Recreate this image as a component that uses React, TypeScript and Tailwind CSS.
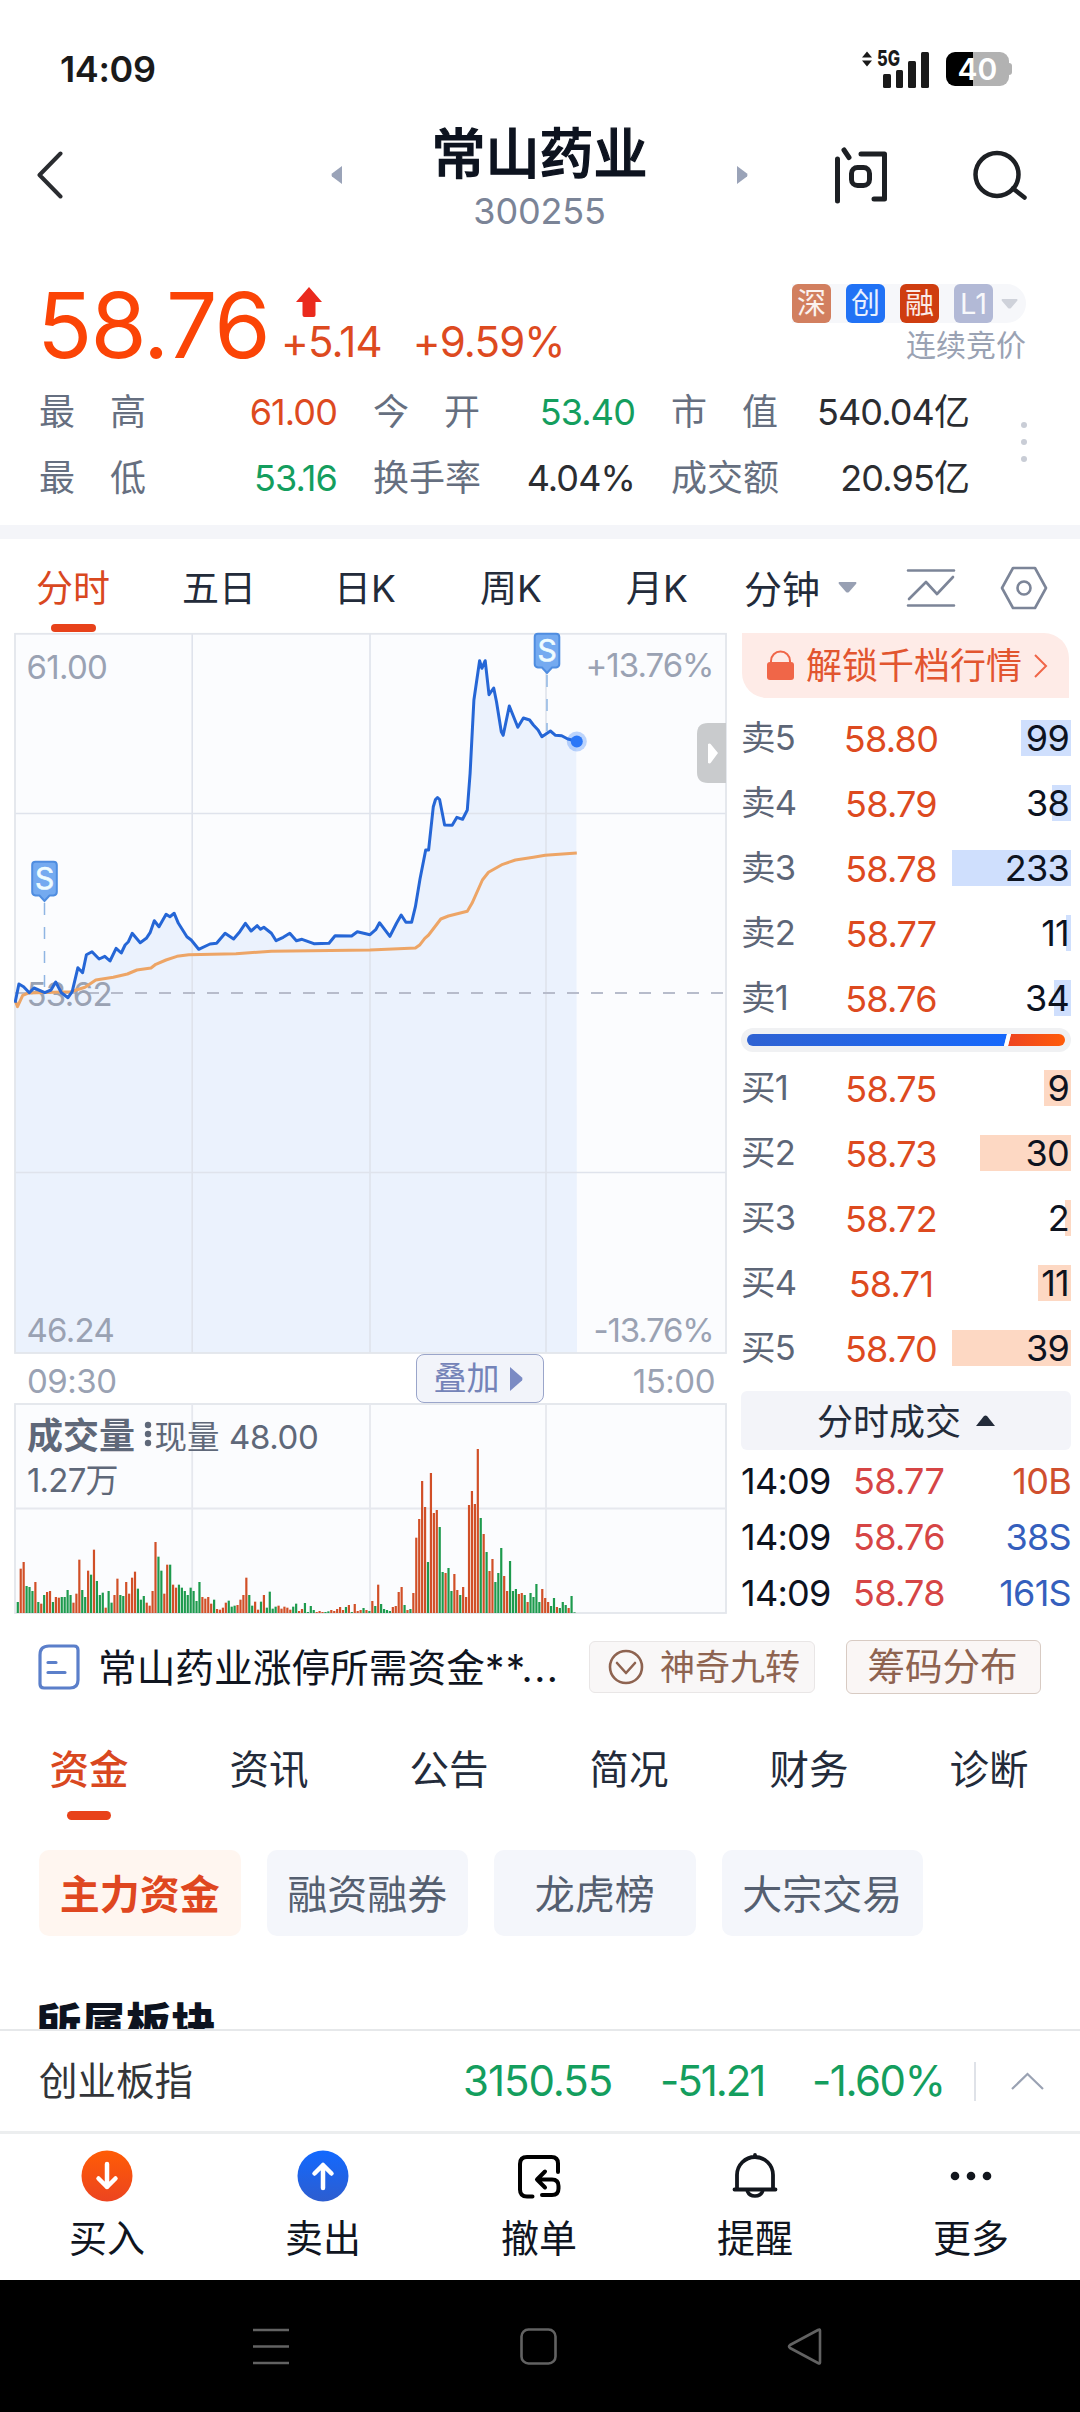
import type { ReactNode } from "react";
import clsx from "clsx";

const stats = [
  [
    { label: ["最", "高"], value: "61.00", tone: "text-[#dd4a1f]" },
    { label: ["今", "开"], value: "53.40", tone: "text-[#149e5e]" },
    { label: ["市", "值"], value: "540.04亿", tone: "text-[#2b2d31]" },
  ],
  [
    { label: ["最", "低"], value: "53.16", tone: "text-[#149e5e]" },
    { label: ["换", "手", "率"], value: "4.04%", tone: "text-[#2b2d31]" },
    { label: ["成", "交", "额"], value: "20.95亿", tone: "text-[#2b2d31]" },
  ],
];

const badges = [
  { text: "深", bg: "bg-[#d27f5f]" },
  { text: "创", bg: "bg-[#2172f5]" },
  { text: "融", bg: "bg-[#cf3d10]" },
  { text: "L1", bg: "bg-[#b2b9d6]" },
];

const periods = ["分时", "五日", "日K", "周K", "月K"];

const sells = [
  { label: "卖5", price: "58.80", qty: 99, width: 50 },
  { label: "卖4", price: "58.79", qty: 38, width: 19 },
  { label: "卖3", price: "58.78", qty: 233, width: 119 },
  { label: "卖2", price: "58.77", qty: 11, width: 5 },
  { label: "卖1", price: "58.76", qty: 34, width: 17 },
];

const buys = [
  { label: "买1", price: "58.75", qty: 9, width: 27 },
  { label: "买2", price: "58.73", qty: 30, width: 91 },
  { label: "买3", price: "58.72", qty: 2, width: 6 },
  { label: "买4", price: "58.71", qty: 11, width: 33 },
  { label: "买5", price: "58.70", qty: 39, width: 119 },
];

const ticks = [
  { time: "14:09", price: "58.77", qty: "10B", tone: "text-[#cf4f2e]" },
  { time: "14:09", price: "58.76", qty: "38S", tone: "text-[#355fbd]" },
  { time: "14:09", price: "58.78", qty: "161S", tone: "text-[#355fbd]" },
];

const tabs = ["资金", "资讯", "公告", "简况", "财务", "诊断"];
const chips = ["主力资金", "融资融券", "龙虎榜", "大宗交易"];

const priceLine =
  "0.1,369.7 3.9,351 8.6,353.7 14.3,359.7 19,355 29.8,359.7 36,357 40.7,349 46.4,359.7 53,364.7 57.2,358.7 62.9,334.7 67.6,339.7 71.4,321.7 77,318.7 84.1,326 89.8,323.3 95,328 101.1,315.3 106.3,320 110.1,312 113.4,308.7 117.2,300.3 125.2,309.7 131.3,305.3 135.1,299.7 139.3,287.7 144,293.7 151.1,281.3 154.9,283.7 159.2,280.3 163.4,290.3 171.9,303.7 176.2,307 183.7,316.3 195,311 201.6,310.3 210.1,300.3 218.6,306 224.8,298.7 230.4,290.3 236.1,298 242.2,292.7 245.5,296.3 248.8,294.3 256.4,300.3 261.1,307.7 268.2,304.3 274.8,300.3 281.4,307.7 287,306.3 298.9,310.7 314,310.3 320.1,302.7 336.6,303 342.3,298.7 355,301.7 360.7,296.7 364.5,289.7 374.9,303.3 381.5,290.3 386.2,282 390.9,289.3 396.6,289.3 400.4,273.7 405,246 410.7,217 413.6,217 418.3,173.7 420.5,166.5 422.5,164.5 424.6,166.5 429.6,192 437.2,192.3 441.9,184.3 447.6,186.3 452.3,177 455.1,140.3 458.9,67 464.6,27.7 466.9,35.3 470.2,27.7 474,61.7 478.7,55 481.5,68.7 486.3,98.7 488.2,102.3 494.3,73 502.8,94.3 508.4,85 514.6,87 518.4,92 523.1,97 526.9,103.7 535.4,98 540.5,102.3 546.7,102.7 552.8,106 561.3,108";

const averageLine =
  "0,367 2.5,373.7 7.7,362.3 13.3,360 55.8,358.7 70,354.3 80.8,347 98.3,344.3 112.4,341 121.9,337 136,335 140.8,331.3 151,327 162,323.3 173.8,321.7 221,320.7 256.4,318.3 355,317 400.4,315 405,311.7 409.8,305.3 413.6,302 425.8,286 433.4,283 452.3,278.3 457,270.3 467.4,247 473.5,239.3 487.7,231.3 500.4,227 518.4,224.3 530.2,222.3 561.8,220";

// one bar per minute, negative when the price fell; unit is a third of a pixel
const volumes = [
  -33, 133, 153, -81, -78, -66, 93, -33, 28, -54, 63, 66, -33, 48, 46, -48, -48, -69, -54, 31, 58, 160, -69, -48,
  127, -115, 190, -96, -54, -61, 16, -66, -31, 54, 103, -54, -51, 93, 58, 106, 124, -73, -40, -51, 31, 22, 66, 213,
  -169, -127, 58, 145, -145, 85, 76, -85, -76, -66, -54, -76, -66, -36, -93, 48, 43, 48, 28, -40, 12, 10, 16, 31,
  -37, -19, -22, 24, 40, 54, 106, -54, -22, 34, 10, -34, 54, -16, -64, -13, -19, 22, 13, 19, 16, 10, -19, -28,
  6, 12, -30, -3, -21, -9, 3, 6, 3, -3, -5, 9, 6, 12, 18, 9, -18, 24, -3, 27, 6, 9, -15, 9,
  -6, 36, -21, 85, -27, -12, -9, -6, 18, 21, 63, 78, -24, 9, -12, 60, 226, 282, 396, 318, -153, 420, 300, 309,
  -258, -123, 120, -135, -66, 117, 69, -54, 78, 48, 324, 366, 327, 492, -285, 237, -183, 126, 162, -93, -120, -195,
  111, 66, -156, -66, -72, 57, 60, -54, 33, -60, -48, -87, -33, 72, 45, 33, -21, -45, 18, -15, -33, -24, 15, -51, -2,
];

function StatusBar() {
  return (
    <div className="flex h-[110px] items-center justify-between pt-[28px] pr-[68px] pl-[60px]">
      <span className="text-[36px] font-semibold tracking-[-0.01em] text-[#1a1a1a]">14:09</span>
      <div className="flex items-center gap-4">
        <svg className="overflow-visible" width="68" height="38" viewBox="0 0 68 38" fill="#1a1a1a">
          <path d="M0 7.500 5 1.500l5 6zM0 10.500h10l-5 6z" />
          <text x="15" y="16" fontSize="21" fontWeight="800" textLength="23" lengthAdjust="spacingAndGlyphs">5G</text>
          <rect x="21" y="24" width="8" height="14" rx="1.500" />
          <rect x="34" y="20" width="7" height="18" rx="1.500" />
          <rect x="46" y="11" width="8" height="27" rx="1.500" />
          <rect x="59" y="2" width="8" height="36" rx="1.500" />
        </svg>
        <div className="flex items-center">
          <div className="flex h-[34px] w-[63px] items-center justify-center rounded-[9px] bg-linear-to-r from-black from-43% to-[#b2b2b2] to-43% text-[30px] leading-none font-semibold text-white">
            40
          </div>
          <div className="h-3 w-[3px] rounded-r-sm bg-[#b2b2b2]" />
        </div>
      </div>
    </div>
  );
}

function Header() {
  return (
    <header className="flex h-[130px] items-center pr-[50px] pl-[37px]">
      <svg width="26" height="48" viewBox="0 0 26 48" fill="none" stroke="#2a2c30" strokeWidth="4" strokeLinecap="round" strokeLinejoin="round">
        <path d="M23.500 2.500 2.500 24l21 21.500" />
      </svg>
      <svg className="ml-[268px]" width="11" height="20" viewBox="0 0 11 20" fill="#9aa3b8">
        <path d="M11 1v18L1 11.500q-1-1.500 0-3z" />
      </svg>
      <div className="flex w-[395px] flex-col items-center gap-[11px] pt-[6px]">
        <h1 className="text-[54px] leading-[54px] font-medium text-[#0d131f] [-webkit-text-stroke:1.2px]">常山药业</h1>
        <span className="text-[36px] leading-[36px] tracking-[-0.005em] text-[#7b8497]">300255</span>
      </div>
      <svg width="11" height="20" viewBox="0 0 11 20" fill="#9aa3b8">
        <path d="M0 1v18l10-7.500q1-1.500 0-3z" />
      </svg>
      <svg className="ml-[86px]" width="54" height="58" viewBox="0 0 54 58" fill="none" stroke="#1d2024" strokeWidth="5" strokeLinecap="round" strokeLinejoin="round">
        <path d="M3.500 13v42M10 4l5 7.500M27 8h23.500v45H40" />
        <rect x="17.500" y="21.500" width="18" height="18" rx="6" />
      </svg>
      <svg className="ml-[84px]" width="56" height="52" viewBox="0 0 56 52" fill="none" stroke="#1d2024" strokeWidth="4.500" strokeLinecap="round">
        <circle cx="25" cy="25.500" r="21.500" />
        <path d="m41 39.500 11.500 9" />
      </svg>
    </header>
  );
}

function Quote() {
  return (
    <section className="h-[285px] pt-[40px]">
      <div className="flex h-[99px] justify-between pr-[54px] pl-[37px]">
        <div className="flex">
          <span className="w-[244px] text-[91px] leading-[90px] tracking-[-0.02em] whitespace-nowrap text-[#fb4406]">58.76</span>
          <div className="flex flex-col pt-[7px]">
            <svg className="ml-[15px]" width="26" height="31" viewBox="0 0 26 31" fill="#ea2a1d">
              <path d="M13 0 26 15h-6.500v13q0 2-2 2h-9q-2 0-2-2V15H0z" />
            </svg>
            <div className="flex gap-[31px] text-[42px] leading-[47px] tracking-[-0.02em] text-[#dd4a1f]">
              <span>+5.14</span>
              <span>+9.59%</span>
            </div>
          </div>
        </div>
        <div className="flex flex-col items-end pt-1">
          <div className="flex h-[39px] items-center gap-[15px] rounded-r-full bg-[#f6f7fa] pr-2">
            {badges.map(({ text, bg }) => (
              <span key={text} className={clsx("flex h-[39px] w-[39px] items-center justify-center rounded-md text-[29px] leading-none text-white/90", bg)}>
                {text}
              </span>
            ))}
            <svg className="-ml-[7px]" width="17" height="10" viewBox="0 0 17 10" fill="#cfd2da">
              <path d="M1 0h15q1 1 0 2l-6 7q-1.500 1-3 0L1 2Q0 1 1 0z" />
            </svg>
          </div>
          <span className="mt-[5px] text-[30px] leading-[34px] text-[#9aa2b3]">连续竞价</span>
        </div>
      </div>
      <div className="flex pl-[39px]">
        <div className="flex flex-col">
          {stats.map((row, i) => (
            <div key={i} className="flex h-[66px] items-center text-[36px] leading-none">
              {row.map(({ label, value, tone }, j) => (
                <div key={value} className={clsx("flex justify-between", j === 0 && "w-[298px]", j === 1 && "ml-[36px] w-[262px]", j === 2 && "ml-[36px] w-[298px]")}>
                  <span className="flex w-[107px] justify-between text-[#666f80]">
                    {label.map((c) => <span key={c}>{c}</span>)}
                  </span>
                  <span className={clsx("tracking-[-0.025em]", tone)}>{value}</span>
                </div>
              ))}
            </div>
          ))}
        </div>
        <div className="flex flex-col gap-[11px] pt-[43px] pl-[52px]">
          <i className="size-[6px] rounded-full bg-[#c9cdd6]" />
          <i className="size-[6px] rounded-full bg-[#c9cdd6]" />
          <i className="size-[6px] rounded-full bg-[#c9cdd6]" />
        </div>
      </div>
    </section>
  );
}

function PeriodBar() {
  return (
    <nav className="flex h-[93px] text-[37px] text-[#232b3a]">
      {periods.map((p, i) => (
        <div key={p} className={clsx("flex w-[146px] flex-col items-center pt-[29px]", i === 0 && "text-[#d9481f]")}>
          <span className="leading-[42px]">{p}</span>
          {i === 0 && <div className="mt-[14px] h-[9px] w-[45px] rounded-full bg-[#e8421a]" />}
        </div>
      ))}
      <div className="flex h-[97px] flex-1 items-center pl-[14px]">
        <span className="pt-[2px] text-[38px] leading-none">分钟</span>
        <svg className="ml-[18px]" width="19" height="11" viewBox="0 0 19 11" fill="#98a0b3">
          <path d="M1 0h17q1 1 0 2l-7 8q-1.500 1-3 0L1 2Q0 1 1 0z" />
        </svg>
        <svg className="ml-[49px]" width="50" height="40" viewBox="0 0 50 40" fill="none" stroke="#7c8598" strokeWidth="2.600" strokeLinecap="round" strokeLinejoin="round">
          <path d="M2 2.500h46M2 37.500h46M3 31l17-17 11 12L47 9" />
        </svg>
        <svg className="ml-[44px]" width="48" height="44" viewBox="0 0 48 44" fill="none" stroke="#7c8598" strokeWidth="2.600" strokeLinejoin="round">
          <path d="M13 2h22l11 20-11 20H13L2 22z" />
          <circle cx="24" cy="22" r="6.500" />
        </svg>
      </div>
    </nav>
  );
}

function SellMarker({ x, y, end }: { x: number; y: number; end: number }) {
  return (
    <g transform={`translate(${x} ${y})`}>
      <path d={`M0 42V${end - y}`} stroke="#8fb5e3" strokeWidth="1.500" strokeDasharray="12 12" />
      <path d="M-9 .7H9Q12.300.7 12.300 4v27q0 3-3.300 3.500H5L0 40l-5-5.500h-4q-3.300-.5-3.300-3.500V4q0-3.300 3.300-3.300z" fill="#74aaf0" stroke="#4f8de0" strokeWidth="2" />
      <text y="28" textAnchor="middle" fontSize="30" fill="#effcff" stroke="#effcff" strokeWidth=".6">S</text>
    </g>
  );
}

function PriceChart() {
  return (
    <svg className="block" width="715" height="722" viewBox="-1 -1 715 722">
      <rect y=".5" width="711" height="719.500" fill="#fbfcfe" />
      <polygon points={`0,720 ${priceLine} 562,720`} fill="#ebf2fd" />
      <path d="M177.200 0v720M355 0v720M531 0v720M0 180.500h711M0 539.500h711" stroke="#dfe3ec" strokeWidth="1.600" />
      <rect y=".8" width="711" height="719.200" fill="none" stroke="#e3e6ec" strokeWidth="1.800" />
      <path d="M0 360h711" stroke="#b7bccb" strokeWidth="2" strokeDasharray="12 12" />
      <g fontSize="33" fill="#9aa2b3" letterSpacing="-.7">
        <text x="11.500" y="46">61.00</text>
        <text x="11.500" y="373">53.62</text>
        <text x="11.500" y="709">46.24</text>
        <text x="698.500" y="43.500" textAnchor="end" letterSpacing="-1">+13.76%</text>
        <text x="698.500" y="709" textAnchor="end" letterSpacing="-1.200">-13.76%</text>
      </g>
      <polyline points={averageLine} fill="none" stroke="#eda566" strokeWidth="3" strokeLinejoin="round" />
      <polyline points={priceLine} fill="none" stroke="#2566d6" strokeWidth="3" strokeLinejoin="round" />
      <SellMarker x={29.5} y={228} end={360} />
      <SellMarker x={532} y={0} end={98} />
      <circle cx="561.800" cy="108.500" r="10" fill="#2b77f7" opacity=".3" />
      <circle cx="561.800" cy="108.500" r="6" fill="#2b77f7" />
      <path d="M711 90h-18q-11 0-11 11v38q0 11 11 11h18z" fill="#c9cbcd" />
      <path d="M693 111q2-1 3 .5l7 8.500-7 9.500q-1 1.500-3 .5z" fill="#fff" />
    </svg>
  );
}

function TimeAxis() {
  return (
    <div className="flex h-[49px] items-center justify-between pr-[14px] pl-[13px] text-[33px] leading-none tracking-[-0.015em] text-[#9aa2b3]">
      <span className="w-[389px] pt-[6px]">09:30</span>
      <button className="flex h-[49px] w-[128px] items-center justify-center gap-[10px] rounded-lg border-[1.500px] border-[#9aa5ca] bg-[#f2f4fa] pr-1 text-[33px] tracking-normal text-[#7483b8]">
        叠加
        <svg width="13" height="24" viewBox="0 0 13 24" fill="#7b8bc4">
          <path d="M0 0 12 10.500q1 1.500 0 3L0 24z" />
        </svg>
      </button>
      <span className="flex-1 pt-[6px] text-right">15:00</span>
    </div>
  );
}

function VolumeChart() {
  return (
    <svg className="block" width="715" height="212" viewBox="-1 -1 715 212">
      <rect width="711" height="209" fill="#fbfcfe" stroke="#e3e6ec" strokeWidth="1.800" />
      <path d="M177.200 0v209M355 0v209M531 0v209M0 104.500h711" stroke="#e6e8ee" strokeWidth="1.800" />
      <g fill="#5f6879" fontSize="33">
        <text x="12" y="44.500" fontSize="36" fontWeight="700">成交量</text>
        <circle cx="133" cy="21" r="3.200" />
        <circle cx="133" cy="30" r="3.200" />
        <circle cx="133" cy="39" r="3.200" />
        <text x="139.500" y="44.500" fontSize="32.500">现量</text>
        <text x="214" y="45" letterSpacing="-.4">48.00</text>
        <text x="12" y="88" letterSpacing="-.8">1.27万</text>
      </g>
      {volumes.map((v, i) => (
        <rect key={i} x={1.7 + i * 2.93} y={209 - Math.abs(v) / 3} width="2.200" height={Math.abs(v) / 3} fill={v > 0 ? "#d14f27" : "#1d9a4d"} />
      ))}
    </svg>
  );
}

type Level = { label: string; price: string; qty: number; width: number };

function Levels({ rows, bar }: { rows: Level[]; bar: string }) {
  return (
    <div className="flex flex-col">
      {rows.map(({ label, price, qty, width }) => (
        <div key={label} className="flex h-[65px] items-center text-[36px] leading-none">
          <span className="w-[83px] pt-[2px] text-[34.500px] tracking-[-0.02em] text-[#5d6677]">{label}</span>
          <span className="w-[134px] pt-[2px] text-center tracking-[-0.02em] text-[#dd4a1f]">{price}</span>
          <div className="relative flex h-[36px] flex-1 items-center justify-end pr-[2px]">
            <div className={clsx("absolute inset-y-0 right-0", bar)} style={{ width }} />
            <span className="relative pt-[1px] tracking-[-0.02em] text-[#0d131f]">{qty}</span>
          </div>
        </div>
      ))}
    </div>
  );
}

function OrderBook() {
  return (
    <aside className="w-[330px] pt-[1px]">
      <div className="ml-[1px] flex h-[65px] w-[327px] items-center rounded-tr-[25px] rounded-bl-[25px] bg-[#feebe7] pl-[25px] text-[#e2552f]">
        <svg width="27" height="31" viewBox="0 0 27 31">
          <path d="M4 14v-3a9.500 9.500 0 0 1 19 0v3" fill="none" stroke="#f06648" strokeWidth="2" />
          <rect y="12" width="27" height="18" rx="3" fill="#f06648" />
        </svg>
        <span className="ml-[12px] pt-[1px] text-[36px] leading-none">解锁千档行情</span>
        <svg className="ml-[11px]" width="15" height="24" viewBox="0 0 15 24" fill="none" stroke="#f06648" strokeWidth="2">
          <path d="m2 1 11 11L2 23" />
        </svg>
      </div>
      <div className="pt-[7px]">
        <Levels rows={sells} bar="bg-[#cfdffd]" />
      </div>
      <div className="-mt-[2px] flex h-[24px] items-center rounded-full bg-[#f0f1f3] px-[6px]">
        <svg width="318" height="12" viewBox="0 0 318 12">
          <defs>
            <linearGradient id="ask"><stop stopColor="#2f62d2" /><stop offset="1" stopColor="#1668fb" /></linearGradient>
            <linearGradient id="bid"><stop stopColor="#ee4420" /><stop offset="1" stopColor="#ff5c0a" /></linearGradient>
          </defs>
          <path d="M6 0h254l-3 12H6A6 6 0 0 1 6 0z" fill="url(#ask)" />
          <path d="M264 0h48a6 6 0 0 1 0 12h-51z" fill="url(#bid)" />
          <path d="M260 0h4l-3 12h-4z" fill="#fff" />
        </svg>
      </div>
      <div className="pt-[3px]">
        <Levels rows={buys} bar="bg-[#fdd8c3]" />
      </div>
      <div className="mt-[11px] flex h-[59px] items-center justify-center gap-[15px] rounded-md bg-[#f3f4f9] text-[36px] leading-none text-[#232b3a]">
        <span className="pt-[2px]">分时成交</span>
        <svg width="19" height="11" viewBox="0 0 19 11" fill="#232b3a">
          <path d="M0 11 8 1q1.500-1 3 0l8 10z" />
        </svg>
      </div>
      <div className="flex flex-col pt-[3px]">
        {ticks.map(({ time, price, qty, tone }) => (
          <div key={price} className="flex h-[56px] items-center text-[36px] leading-none tracking-[-0.02em]">
            <span className="w-[112px] text-[#0d131f]">{time}</span>
            <span className="text-[#d64545]">{price}</span>
            <span className={clsx("flex-1 text-right", tone)}>{qty}</span>
          </div>
        ))}
      </div>
    </aside>
  );
}

function NewsRow() {
  return (
    <div className="flex h-[106px] items-center pl-[38px] text-[#8e6350]">
      <svg width="42" height="46" viewBox="0 0 42 46" fill="none" stroke="#5b7fca" strokeWidth="3.200" strokeLinecap="round">
        <path d="M11 2h25q4 0 4 4v30q0 8-8 8H6q-4 0-4-4V11q0-9 9-9z" />
        <path d="M10 18.500h8M10 28.500h17" />
      </svg>
      <span className="ml-[18px] w-[473px] pt-[3px] text-[38.700px] leading-none whitespace-nowrap text-[#10151f]">
        常山药业涨停所需资金<span className="tracking-[0.04em]">**...</span>
      </span>
      <div className="ml-[18px] flex h-[52px] w-[226px] items-center rounded-md border border-[#e9e6e6] bg-[#f9f7f7] pl-[18px] text-[35px] leading-none">
        <svg width="36" height="36" viewBox="0 0 36 36" fill="none" stroke="#8e6350" strokeWidth="2.600" strokeLinecap="round" strokeLinejoin="round">
          <circle cx="18" cy="18" r="16" />
          <path d="m9 14 9 10 9-10" />
        </svg>
        <span className="ml-[16px]">神奇九转</span>
      </div>
      <div className="ml-[31px] flex h-[54px] w-[195px] items-center justify-center rounded-md border-[1.500px] border-[#d8cbc3] bg-[#faf6f5] pr-[2px] text-[37.500px] leading-none">
        筹码分布
      </div>
    </div>
  );
}

function Funds() {
  return (
    <section>
      <nav className="-ml-px flex h-[130px] text-[39.500px] text-[#232b3a]">
        {tabs.map((t, i) => (
          <div key={t} className={clsx("flex w-[180px] flex-col items-center pt-[28px]", i === 0 && "font-medium text-[#d9481f]")}>
            <span className="leading-[44px]">{t}</span>
            {i === 0 && <div className="mt-[19px] h-[9px] w-[44px] rounded-full bg-[#e8421a]" />}
          </div>
        ))}
      </nav>
      <div className="flex gap-[26px] pl-[39px]">
        {chips.map((c, i) => (
          <button
            key={c}
            className={clsx(
              "flex h-[86px] w-[201.500px] items-center justify-center rounded-[10px] pt-[3px] text-[40px] leading-none",
              i === 0 ? "bg-[#fff6f0] font-bold text-[#df4720]" : "bg-[#f4f6fb] text-[#555f70]"
            )}
          >
            {c}
          </button>
        ))}
      </div>
      <div className="mt-[60px] h-[33px] overflow-hidden pl-[36px]">
        <h2 className="text-[45px] leading-[57px] font-black text-[#0d131f]">所属板块</h2>
      </div>
    </section>
  );
}

function IndexBar() {
  return (
    <div className="flex h-[105px] items-center border-t-2 border-b-[3px] border-t-[#e6e8ea] border-b-[#eceeef] pl-[39px] text-[38.500px] leading-none">
      <span className="w-[424px] text-[#333539]">创业板指</span>
      <div className="flex text-[42px] tracking-[-0.025em] text-[#149e5e]">
        <span className="w-[197px]">3150.55</span>
        <span className="w-[152px] tracking-[-0.05em]">-51.21</span>
        <span className="w-[162px] tracking-[-0.035em]">-1.60%</span>
      </div>
      <div className="h-[39px] w-[2px] bg-[#dfe2e8]" />
      <svg className="ml-[35px]" width="33" height="18" viewBox="0 0 33 18" fill="none" stroke="#9aa2b3" strokeWidth="2.200">
        <path d="M1 17 16.500 2 32 17" />
      </svg>
    </div>
  );
}

const actions: { label: string; icon: ReactNode }[] = [
  {
    label: "买入",
    icon: (
      <>
        <defs><linearGradient id="buy" x2="0" y2="1"><stop stopColor="#ff5c05" /><stop offset="1" stopColor="#ec4420" /></linearGradient></defs>
        <circle cx="26" cy="26" r="25.500" fill="url(#buy)" />
        <path d="M26 14v23M17.500 28.500 26 37l8.500-8.500" stroke="#fff" strokeWidth="4.500" />
      </>
    ),
  },
  {
    label: "卖出",
    icon: (
      <>
        <defs><linearGradient id="sell" x2="0" y2="1"><stop stopColor="#1269ff" /><stop offset="1" stopColor="#2d5dcf" /></linearGradient></defs>
        <circle cx="26" cy="26" r="25.500" fill="url(#sell)" />
        <path d="M26 38V15M17.500 23.500 26 15l8.500 8.500" stroke="#fff" strokeWidth="4.500" />
      </>
    ),
  },
  {
    label: "撤单",
    icon: <path d="M19.500 46.500H14q-7 0-7-7V14q0-7 7-7h24.500q6.500 0 6.500 6.500V22M29 45h10q6.500 0 6.500-6.500V36q0-6.500-6.500-6.500H25M32 21.500l-8 8 8 8" stroke="#000" strokeWidth="4" />,
  },
  {
    label: "提醒",
    icon: (
      <>
        <path d="M8 39.500V25a18 18 0 0 1 36 0v14.500M5.500 39.500h41M26 7V5" stroke="#12161d" strokeWidth="3.800" />
        <path d="M18.500 41.500a8 7 0 0 0 15 0" stroke="#12161d" strokeWidth="3.500" />
      </>
    ),
  },
  {
    label: "更多",
    icon: (
      <g fill="#12161d">
        <circle cx="10" cy="26" r="4.300" />
        <circle cx="26" cy="26" r="4.300" />
        <circle cx="42" cy="26" r="4.300" />
      </g>
    ),
  },
];

function ActionBar() {
  return (
    <div className="-ml-px flex h-[146px]">
      {actions.map(({ label, icon }) => (
        <div key={label} className="flex w-[216px] flex-col items-center pt-[16px]">
          <svg width="52" height="52" viewBox="0 0 52 52" fill="none" strokeLinecap="round" strokeLinejoin="round">{icon}</svg>
          <span className="mt-[16px] text-[38px] leading-[40px] text-[#10151f]">{label}</span>
        </div>
      ))}
    </div>
  );
}

function SystemNav() {
  return (
    <div className="flex h-[132px] justify-center bg-black pt-[48px] pr-[2px]">
      <svg width="572" height="38" viewBox="0 0 572 38" fill="none" stroke="#626262" strokeWidth="2.600" strokeLinejoin="round">
        <path d="M0 2h36M0 18.500h36M0 35h36" />
        <rect x="268.500" y="1.500" width="34" height="34" rx="7" />
        <path d="M567 2.500v32q0 1.500-2 .5l-28-15q-2-1.500 0-3l28-15q2-1 2 .5z" />
      </svg>
    </div>
  );
}

export default function App() {
  return (
    <div className="h-[2412px] w-[1080px] overflow-hidden bg-white font-['Inter','Noto_Sans_CJK_SC',sans-serif]">
      <StatusBar />
      <Header />
      <Quote />
      <div className="h-[14px] bg-[#f4f5f9]" />
      <PeriodBar />
      <main className="flex h-[982px] pl-[14px]">
        <div className="w-[727px]">
          <PriceChart />
          <div className="w-[715px]"><TimeAxis /></div>
          <VolumeChart />
        </div>
        <OrderBook />
      </main>
      <NewsRow />
      <Funds />
      <IndexBar />
      <ActionBar />
      <SystemNav />
    </div>
  );
}
